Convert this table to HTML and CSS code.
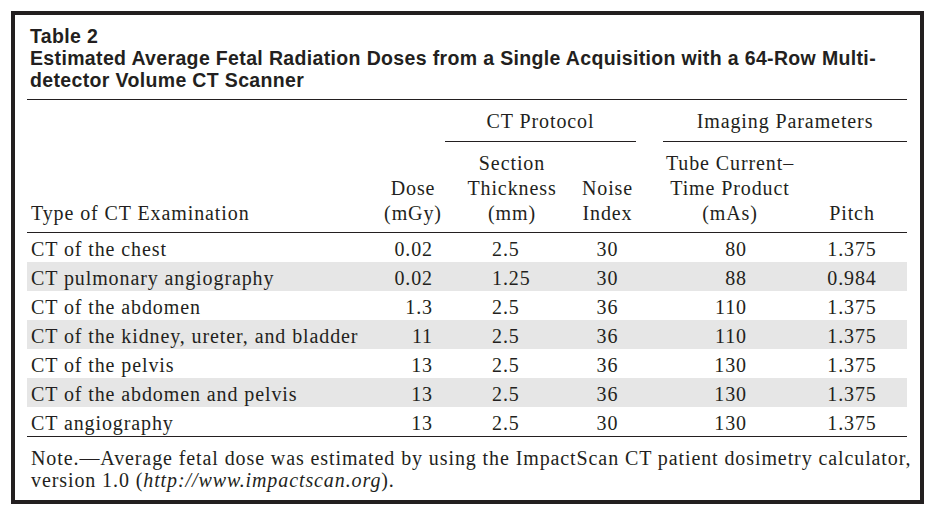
FILE: index.html
```html
<!DOCTYPE html>
<html lang="en">
<head>
<meta charset="utf-8">
<title>Table 2</title>
<link rel="stylesheet" href="styles.css">
</head>
<body>
<div class="frame">
  <div class="caption">
    <div class="caption-label">Table 2</div>
    <div class="caption-title">Estimated Average Fetal Radiation Doses from a Single Acquisition with a 64-Row Multi-<br>detector Volume CT Scanner</div>
  </div>
  <table class="data">
    <colgroup>
      <col class="c-type">
      <col class="c-dose">
      <col class="c-thick">
      <col class="c-noise">
      <col class="c-gap">
      <col class="c-tube">
      <col class="c-pitch">
    </colgroup>
    <thead>
      <tr class="grp">
        <th colspan="2"></th>
        <th colspan="2" class="grp-cell">CT Protocol</th>
        <th></th>
        <th colspan="2" class="grp-cell">Imaging Parameters</th>
      </tr>
      <tr class="heads">
        <th class="left">Type of CT Examination</th>
        <th>Dose<br>(mGy)</th>
        <th>Section<br>Thickness<br>(mm)</th>
        <th>Noise<br>Index</th>
        <th></th>
        <th>Tube Current–<br>Time Product<br>(mAs)</th>
        <th>Pitch</th>
      </tr>
    </thead>
    <tbody>
      <tr><td class="left">CT of the chest</td><td class="dose">0.02</td><td class="thick">2.5</td><td class="noise">30</td><td></td><td class="tube">80</td><td class="pitch">1.375</td></tr>
      <tr class="shade"><td class="left">CT pulmonary angiography</td><td class="dose">0.02</td><td class="thick">1.25</td><td class="noise">30</td><td></td><td class="tube">88</td><td class="pitch">0.984</td></tr>
      <tr><td class="left">CT of the abdomen</td><td class="dose">1.3</td><td class="thick">2.5</td><td class="noise">36</td><td></td><td class="tube">110</td><td class="pitch">1.375</td></tr>
      <tr class="shade"><td class="left">CT of the kidney, ureter, and bladder</td><td class="dose">11</td><td class="thick">2.5</td><td class="noise">36</td><td></td><td class="tube">110</td><td class="pitch">1.375</td></tr>
      <tr><td class="left">CT of the pelvis</td><td class="dose">13</td><td class="thick">2.5</td><td class="noise">36</td><td></td><td class="tube">130</td><td class="pitch">1.375</td></tr>
      <tr class="shade"><td class="left">CT of the abdomen and pelvis</td><td class="dose">13</td><td class="thick">2.5</td><td class="noise">36</td><td></td><td class="tube">130</td><td class="pitch">1.375</td></tr>
      <tr class="last"><td class="left">CT angiography</td><td class="dose">13</td><td class="thick">2.5</td><td class="noise">30</td><td></td><td class="tube">130</td><td class="pitch">1.375</td></tr>
    </tbody>
  </table>
  <p class="note">Note.—Average fetal dose was estimated by using the ImpactScan CT patient dosimetry calculator,<br>version 1.0 (<i>http://www.impactscan.org</i>).</p>
</div>
</body>
</html>
```

FILE: styles.css
```css
html, body {
  margin: 0;
  padding: 0;
  background: #ffffff;
}

body {
  color: #231f20;
  font-family: "Liberation Serif", "Times New Roman", serif;
}

.frame {
  box-sizing: border-box;
  width: 913px;
  height: 493px;
  margin: 11px 0 0 11px;
  border: 4px solid #231f20;
  padding: 0 13px 0 12px;
}

.caption {
  font-family: "Liberation Sans", Arial, sans-serif;
  font-weight: 700;
  font-size: 19.5px;
  line-height: 22px;
  letter-spacing: 0.35px;
  padding: 10px 0 8px 3px;
  border-bottom: 1px solid #231f20;
}

.data {
  width: 880px;
  table-layout: fixed;
  border-collapse: collapse;
  border-spacing: 0;
  font-size: 20px;
  line-height: 25px;
  letter-spacing: 0.9px;
}

.c-type { width: 354px; }
.c-dose { width: 64px; }
.c-thick { width: 134px; }
.c-noise { width: 57px; }
.c-gap { width: 27px; }
.c-tube { width: 134px; }
.c-pitch { width: 110px; }

.data th {
  font-weight: 400;
  padding: 0;
  text-align: center;
  white-space: nowrap;
}

.data td {
  padding: 4px 0 0 0;
  height: 25px;
  white-space: nowrap;
}

.grp th {
  padding: 9px 0 7px 0;
}

.grp .grp-cell {
  border-bottom: 1px solid #231f20;
}

.heads th {
  vertical-align: bottom;
  padding: 9px 0 6px 0;
  border-bottom: 1px solid #231f20;
}

.data .left {
  text-align: left;
  padding-left: 4px;
}

.data .dose {
  text-align: right;
  padding-right: 12px;
}

.data .thick {
  text-align: left;
  padding-left: 47px;
}

.data .noise {
  text-align: center;
}

.data .tube {
  text-align: right;
  padding-right: 50px;
}

.data .pitch {
  text-align: center;
}

.shade td {
  background: #e6e6e6;
}

.last td {
  border-bottom: 1px solid #231f20;
}

.note {
  margin: 0;
  padding: 10px 0 0 4px;
  font-size: 20px;
  line-height: 22px;
  letter-spacing: 0.9px;
  white-space: nowrap;
}
```
